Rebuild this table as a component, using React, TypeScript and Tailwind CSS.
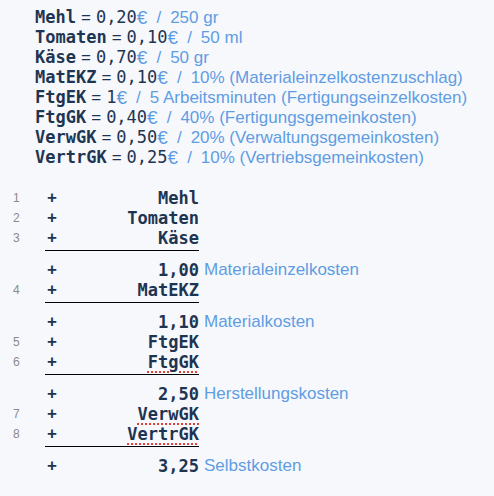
const MONO = "font-['DejaVu_Sans_Mono',monospace]";
const SANS = "font-['Liberation_Sans',Arial,sans-serif]";

const DEFS = [
  { name: "Mehl", val: "0,20", note: "250 gr" },
  { name: "Tomaten", val: "0,10", note: "50 ml" },
  { name: "Käse", val: "0,70", note: "50 gr" },
  { name: "MatEKZ", val: "0,10", note: "10% (Materialeinzelkostenzuschlag)" },
  { name: "FtgEK", val: "1", note: "5 Arbeitsminuten (Fertigungseinzelkosten)" },
  { name: "FtgGK", val: "0,40", note: "40% (Fertigungsgemeinkosten)" },
  { name: "VerwGK", val: "0,50", note: "20% (Verwaltungsgemeinkosten)" },
  { name: "VertrGK", val: "0,25", note: "10% (Vertriebsgemeinkosten)" },
];

type Row = { n?: number; v: string; label?: string; typo?: boolean };

const GROUPS: Row[][] = [
  [{ n: 1, v: "Mehl" }, { n: 2, v: "Tomaten" }, { n: 3, v: "Käse" }],
  [{ v: "1,00", label: "Materialeinzelkosten" }, { n: 4, v: "MatEKZ" }],
  [{ v: "1,10", label: "Materialkosten" }, { n: 5, v: "FtgEK" }, { n: 6, v: "FtgGK", typo: true }],
  [{ v: "2,50", label: "Herstellungskosten" }, { n: 7, v: "VerwGK", typo: true }, { n: 8, v: "VertrGK", typo: true }],
  [{ v: "3,25", label: "Selbstkosten" }],
];

function SumRow({ row }: { row: Row }) {
  return (
    <div className="flex h-5 items-center">
      <div className={`w-[45px] pl-[13px] text-[12px] text-[#8a8a8a] ${SANS}`}>{row.n ?? ""}</div>
      <div className="flex w-[154px] items-center justify-between">
        <span className={`pl-[2px] text-[17px] font-bold ${SANS}`}>+</span>
        <span
          className={`text-[17px] font-bold leading-5 ${MONO} ${
            row.typo ? "underline decoration-[#e0403a] decoration-dotted decoration-2 underline-offset-[3px]" : ""
          }`}
        >
          {row.v}
        </span>
      </div>
      {row.label && <span className={`ml-[5px] text-[17px] text-[#5f9de3] ${SANS}`}>{row.label}</span>}
    </div>
  );
}

export default function App() {
  return (
    <div className="min-h-[496px] w-[494px] bg-[#f7f8fc] pt-2 text-[#1e3552]">
      <div className="pl-[35px]">
        {DEFS.map((d) => (
          <div key={d.name} className={`flex h-5 items-center whitespace-nowrap text-[17px] ${SANS}`}>
            <span className={`font-bold ${MONO}`}>{d.name}</span>
            <span className="mx-[5px]">=</span>
            <span className={MONO}>{d.val}</span>
            <span className="text-[19px] text-[#5f9de3]">€</span>
            <span className="mx-[9px] text-[#5f9de3]">/</span>
            <span className="text-[#5f9de3]">{d.note}</span>
          </div>
        ))}
      </div>

      <div className="mt-5">
        {GROUPS.map((g, i) => (
          <div key={i}>
            {g.map((r) => (
              <SumRow key={r.v} row={r} />
            ))}
            {i < GROUPS.length - 1 && <div className="mb-[9px] ml-[45px] mt-[2px] h-px w-[154px] bg-black" />}
          </div>
        ))}
      </div>
    </div>
  );
}
